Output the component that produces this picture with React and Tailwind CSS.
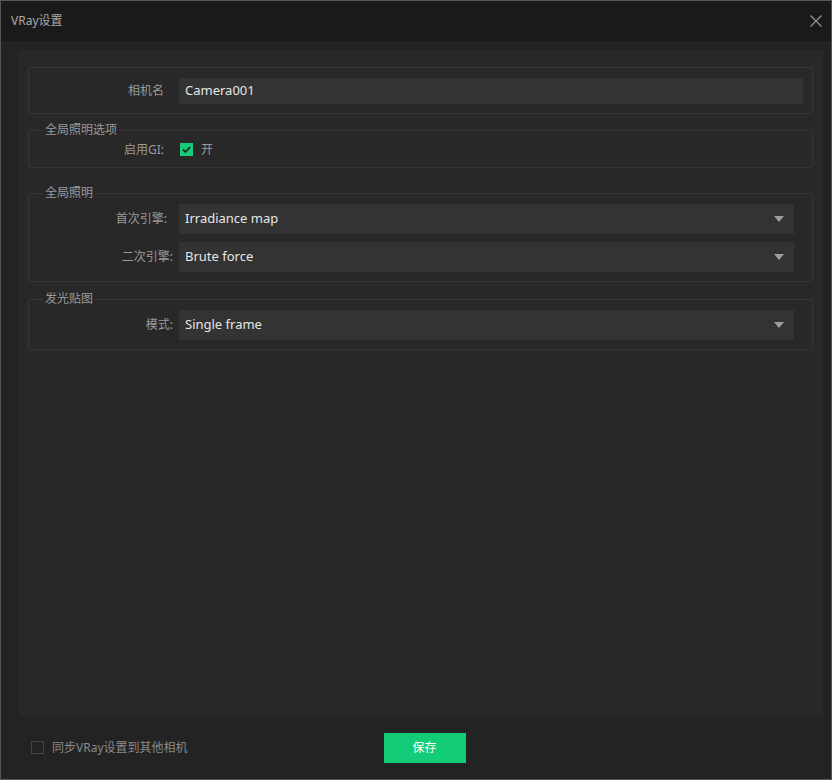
import React from 'react';

const font = { fontFamily: '"Segoe UI", "Noto Sans", "Noto Sans CJK SC", sans-serif' };

const Caret = () => (
  <svg width="10" height="6" viewBox="0 0 10 6" className="shrink-0">
    <path d="M0 0 H10 L5 6 Z" fill="#9e9e9e" />
  </svg>
);

const Group = ({ title, className, children }) => (
  <div className={`relative border border-[#353535] rounded-[2px] ${className}`}>
    {title && (
      <span className="absolute left-[14px] top-[-9px] px-[2px] bg-[#282828] text-[12px] leading-[16px] text-[#9a9a9a]">
        {title}
      </span>
    )}
    {children}
  </div>
);

const Label = ({ children, className }) => (
  <div className={`shrink-0 text-right text-[12px] text-[#9a9a9a] ${className}`}>{children}</div>
);

const Select = ({ value }) => (
  <div className="flex-1 h-[30px] bg-[#333333] flex items-center justify-between pl-[6px] pr-[10px]">
    <span className="text-[13px] text-[#e6e6e6]">{value}</span>
    <Caret />
  </div>
);

export default function App() {
  return (
    <div className="w-[832px] h-[780px] border border-[#575757] bg-[#232323] flex flex-col" style={font}>
      {/* title bar */}
      <div className="h-[40px] shrink-0 bg-[#1a1a1a] flex items-center justify-between pl-[10px] pr-[9px]">
        <span className="text-[12px] text-[#a8a8a8]">VRay设置</span>
        <svg width="12" height="12" viewBox="0 0 12 12">
          <path d="M0.5 0.5 L11.5 11.5 M11.5 0.5 L0.5 11.5" stroke="#8c8c8c" strokeWidth="1.4" />
        </svg>
      </div>

      {/* content panel */}
      <div className="flex-1 flex flex-col pt-[9px] pl-[18px] pr-[8px]">
        <div className="flex-1 bg-[#282828] pt-[17px] pl-[9px] pr-[10px] flex flex-col">
          <Group className="h-[47px] flex items-center pr-[9px]">
            <Label className="w-[135px]">相机名</Label>
            <div className="ml-[15px] flex-1 h-[26px] bg-[#333333] flex items-center pl-[6px] text-[13px] text-[#e6e6e6]">
              Camera001
            </div>
          </Group>

          <Group title="全局照明选项" className="mt-[16px] h-[38px] flex items-center pt-[1px]">
            <Label className="w-[135px]">启用GI:</Label>
            <div className="ml-[16px] w-[13px] h-[13px] bg-[#18c97a] flex items-center justify-center">
              <svg width="9" height="7" viewBox="0 0 9 7">
                <path d="M1 3.5 L3.5 6 L8 1" stroke="#1f2a24" strokeWidth="1.8" fill="none" />
              </svg>
            </div>
            <span className="ml-[8px] text-[12px] text-[#9a9a9a]">开</span>
          </Group>

          <Group title="全局照明" className="mt-[25px] pt-[10px] pb-[9px] pr-[18px] flex flex-col gap-[8px]">
            <div className="flex items-center">
              <Label className="w-[138px]">首次引擎:</Label>
              <div className="w-[12px]" />
              <Select value="Irradiance map" />
            </div>
            <div className="flex items-center">
              <Label className="w-[144px]">二次引擎:</Label>
              <div className="w-[6px]" />
              <Select value="Brute force" />
            </div>
          </Group>

          <Group title="发光贴图" className="mt-[17px] pt-[10px] pb-[9px] pr-[18px]">
            <div className="flex items-center">
              <Label className="w-[144px]">模式:</Label>
              <div className="w-[6px]" />
              <Select value="Single frame" />
            </div>
          </Group>
        </div>
      </div>

      {/* footer */}
      <div className="h-[63px] shrink-0 flex items-center pl-[30px]">
        <div className="w-[13px] h-[13px] border border-[#454545]" />
        <span className="ml-[8px] text-[12px] text-[#8a8a8a]">同步VRay设置到其他相机</span>
        <button className="ml-[196px] w-[82px] h-[30px] bg-[#13cc78] text-white text-[12px]">保存</button>
      </div>
    </div>
  );
}
